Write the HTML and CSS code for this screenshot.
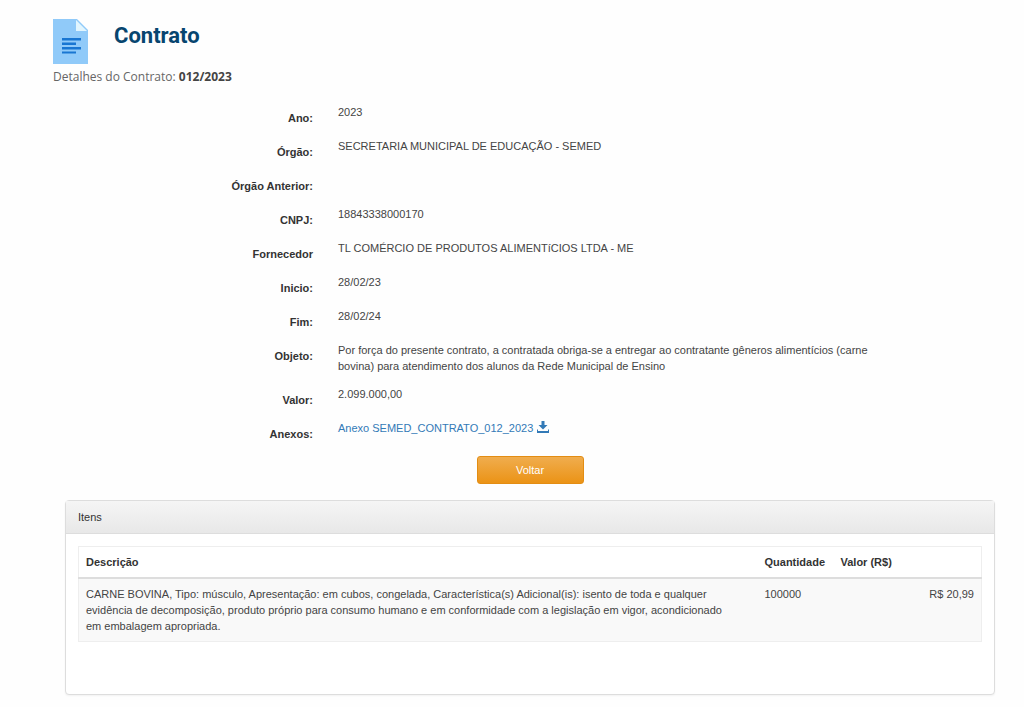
FILE: index.html
```html
<!DOCTYPE html>
<html lang="pt-BR">
  <head>
    <meta charset="UTF-8" />
    <meta name="viewport" content="width=device-width, initial-scale=1.0" />
    <title>Contrato</title>
    <link rel="stylesheet" href="styles.css">
  </head>
  <body>
    <main class="container">
      <header class="page-header">
        <div class="page-title">
          <svg class="doc-icon" viewBox="0 0 35 45" aria-hidden="true">
            <path fill="#90caf9" d="M0 0h24l11 11v34H0z" />
            <path fill="#e1f5fe" d="M23 1v11h11z" />
            <path fill="#1976d2" d="M9 19h19v2.500H9zM9 23.500h14V26H9zM9 28h19v2.500H9zM9 32.500h14v2H9z" />
          </svg>
          <h1>Contrato</h1>
        </div>
        <p class="subtitle">Detalhes do Contrato: <strong>012/2023</strong></p>
      </header>

      <section class="content">
        <dl class="details">
          <div class="detail-row">
            <dt>Ano:</dt>
            <dd>2023</dd>
          </div>
          <div class="detail-row">
            <dt>Órgão:</dt>
            <dd>SECRETARIA MUNICIPAL DE EDUCAÇÃO - SEMED</dd>
          </div>
          <div class="detail-row">
            <dt>Órgão Anterior:</dt>
            <dd></dd>
          </div>
          <div class="detail-row">
            <dt>CNPJ:</dt>
            <dd>18843338000170</dd>
          </div>
          <div class="detail-row">
            <dt>Fornecedor</dt>
            <dd>TL COMÉRCIO DE PRODUTOS ALIMENTíCIOS LTDA - ME</dd>
          </div>
          <div class="detail-row">
            <dt>Inicio:</dt>
            <dd>28/02/23</dd>
          </div>
          <div class="detail-row">
            <dt>Fim:</dt>
            <dd>28/02/24</dd>
          </div>
          <div class="detail-row">
            <dt>Objeto:</dt>
            <dd>Por força do presente contrato, a contratada obriga-se a entregar ao contratante gêneros alimentícios (carne bovina) para atendimento dos alunos da Rede Municipal de Ensino</dd>
          </div>
          <div class="detail-row">
            <dt>Valor:</dt>
            <dd>2.099.000,00</dd>
          </div>
          <div class="detail-row">
            <dt>Anexos:</dt>
            <dd>
              <a href="#">Anexo SEMED_CONTRATO_012_2023
                <svg class="save-icon" viewBox="0 0 12 12" aria-hidden="true">
                  <path d="M4.500 0h3v4h3L6 8.500 1.500 4h3zM0 8.500h1V10h10V8.500h1V12H0z" />
                </svg></a>
            </dd>
          </div>
        </dl>

        <div class="actions">
          <button type="button" class="btn">Voltar</button>
        </div>

        <div class="panel">
          <h2 class="panel-heading">Itens</h2>
          <div class="panel-body">
            <table>
              <thead>
                <tr>
                  <th class="col-description">Descrição</th>
                  <th class="col-quantity">Quantidade</th>
                  <th class="col-value">Valor (R$)</th>
                </tr>
              </thead>
              <tbody>
                <tr>
                  <td class="col-description">CARNE BOVINA, Tipo: músculo, Apresentação: em cubos, congelada, Característica(s) Adicional(is): isento de toda e qualquer evidência de decomposição, produto próprio para consumo humano e em conformidade com a legislação em vigor, acondicionado em embalagem apropriada.</td>
                  <td>100000</td>
                  <td class="money">R$ 20,99</td>
                </tr>
              </tbody>
            </table>
          </div>
        </div>
      </section>
    </main>
  </body>
</html>
```
FILE: styles.css
```css
* {
  box-sizing: border-box;
}

body {
  margin: 0;
  background: #fefefe;
  color: #444;
  font-family: "Liberation Sans", Arial, sans-serif;
  font-size: 11px;
  line-height: 16px;
}

a {
  color: #337ab7;
  text-decoration: none;
}

.container {
  padding: 19px 17px 12px 53px;
}

.page-title {
  display: flex;
  align-items: flex-start;
  gap: 26px;
}

.doc-icon {
  width: 35px;
  height: 45px;
}

h1 {
  margin: 0;
  color: #07456f;
  font-family: Roboto, sans-serif;
  font-size: 22px;
  line-height: 34px;
}

.subtitle {
  margin: 5px 0 0;
  color: #666;
  font-family: "Open Sans", sans-serif;
  font-size: 12px;
}

.subtitle strong {
  color: #444;
}

.content {
  padding: 0 12px;
}

.details {
  margin: 19px 0 0;
}

.detail-row {
  display: grid;
  grid-template-columns: 248px minmax(0, 560px);
  column-gap: 25px;
  padding-bottom: 12px;
}

.detail-row dt {
  padding-top: 6px;
  color: #333;
  font-weight: bold;
  text-align: right;
}

.detail-row dd {
  margin: 0;
}

.save-icon {
  width: 12px;
  height: 12px;
  margin-left: 1px;
  fill: #337ab7;
  vertical-align: -1px;
}

.actions {
  padding-top: 2px;
  text-align: center;
}

.btn {
  width: 107px;
  height: 28px;
  padding: 0;
  border: 1px solid #e38d13;
  border-radius: 3px;
  background: linear-gradient(#f0ad4e, #eb9316);
  color: #fff;
  font: inherit;
}

.panel {
  min-height: 195px;
  margin-top: 16px;
  border: 1px solid #ddd;
  border-radius: 4px;
  background: #fff;
  box-shadow: 0 1px 2px rgba(0, 0, 0, 0.05);
}

.panel-heading {
  margin: 0;
  padding: 8px 12px;
  border-bottom: 1px solid #ddd;
  background: linear-gradient(#f5f5f5, #e8e8e8);
  color: #333;
  font-size: 11px;
  font-weight: normal;
}

.panel-body {
  padding: 12px;
}

table {
  width: 100%;
  border: 1px solid #eee;
  border-collapse: collapse;
  table-layout: fixed;
}

th,
td {
  padding: 7px;
  text-align: left;
  vertical-align: top;
}

th {
  border-bottom: 2px solid #ddd;
  color: #333;
}

tbody tr {
  background: #f9f9f9;
}

.col-description {
  padding-right: 24px;
}

.col-quantity {
  width: 76px;
}

.col-value {
  width: 148px;
}

.money {
  text-align: right;
}
```
